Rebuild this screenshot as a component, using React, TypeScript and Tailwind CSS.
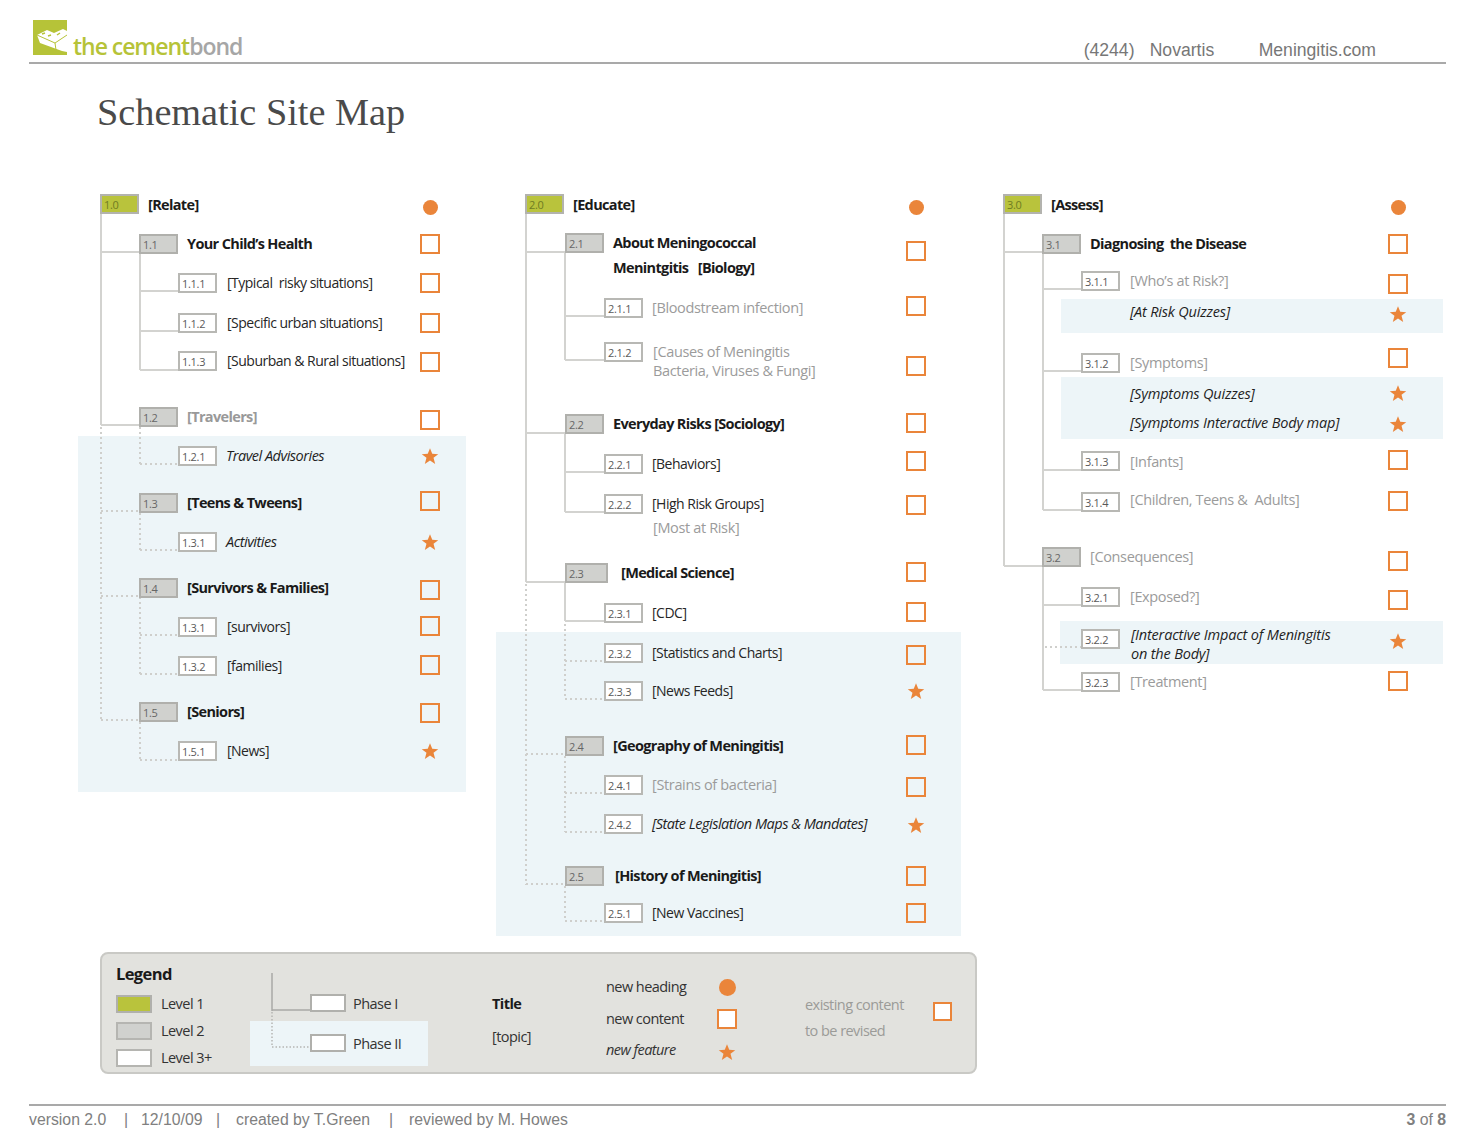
type Tone = "bold" | "boldGray" | "plain" | "gray" | "italic" | "italicWide";
type Mark = "circle" | "square" | "star";
type Level = 1 | 2 | 3;

// canvas starts at page y 180, all y below are page coordinates of the row centre
const CANVAS_Y = 180;

const toneClass: Record<Tone, string> = {
  bold: "text-[14.5px] font-bold text-[#1a1a1a] tracking-[-0.65px]",
  boldGray: "text-[14.5px] font-bold text-[#999999] tracking-[-0.65px]",
  plain: "text-[14px] text-[#262626] tracking-[-0.5px]",
  gray: "text-[14.5px] text-[#9b9b9b] tracking-[-0.35px]",
  italic: "text-[14.5px] italic text-[#1f1f1f] tracking-[-0.5px]",
  italicWide: "text-[14.5px] italic text-[#1f1f1f] tracking-[-0.18px]",
};

const levelClass: Record<Level, string> = {
  1: "bg-[#b9c33c] border-[#b3b3ae] text-[#6f7c22]",
  2: "bg-[#d0d1ce] border-[#b0b0ac] text-[#666666]",
  3: "bg-white border-[#b8b8b4] text-[#595959]",
};

type Box = { num: string; level: Level; x: number; y: number; w?: number };
type Label = { text: string; x: number; y: number; tone: Tone };
type Pin = { kind: Mark; y: number };
type Seg = [number, number, number, number];

type Column = {
  markX: number;
  panels: { x: number; y: number; w: number; h: number }[];
  solid: Seg[];
  dotted: Seg[];
  boxes: Box[];
  labels: Label[];
  marks: Pin[];
};

const columns: Column[] = [
  {
    markX: 430,
    panels: [{ x: 78, y: 436, w: 388, h: 356 }],
    solid: [
      [101, 213, 101, 425],
      [101, 425, 139, 425],
      [101, 252, 139, 252],
      [140, 253, 140, 370],
      [140, 291, 178, 291],
      [140, 331, 178, 331],
      [140, 370, 178, 370],
    ],
    dotted: [
      [101, 427, 101, 720],
      [101, 511, 139, 511],
      [101, 596, 139, 596],
      [101, 720, 139, 720],
      [140, 427, 140, 464],
      [140, 464, 178, 464],
      [140, 513, 140, 550],
      [140, 550, 178, 550],
      [140, 597, 140, 674],
      [140, 635, 178, 635],
      [140, 674, 178, 674],
      [140, 722, 140, 760],
      [140, 760, 178, 760],
    ],
    boxes: [
      { num: "1.0", level: 1, x: 100, y: 204 },
      { num: "1.1", level: 2, x: 139, y: 244 },
      { num: "1.1.1", level: 3, x: 178, y: 283 },
      { num: "1.1.2", level: 3, x: 178, y: 323 },
      { num: "1.1.3", level: 3, x: 178, y: 361 },
      { num: "1.2", level: 2, x: 139, y: 417 },
      { num: "1.2.1", level: 3, x: 178, y: 456 },
      { num: "1.3", level: 2, x: 139, y: 503 },
      { num: "1.3.1", level: 3, x: 178, y: 542 },
      { num: "1.4", level: 2, x: 139, y: 588 },
      { num: "1.3.1", level: 3, x: 178, y: 627 },
      { num: "1.3.2", level: 3, x: 178, y: 666 },
      { num: "1.5", level: 2, x: 139, y: 712 },
      { num: "1.5.1", level: 3, x: 178, y: 751 },
    ],
    labels: [
      { text: "[Relate]", x: 148, y: 205, tone: "bold" },
      { text: "Your Child’s Health", x: 187, y: 244, tone: "bold" },
      { text: "[Typical  risky situations]", x: 227, y: 283, tone: "plain" },
      { text: "[Specific urban situations]", x: 227, y: 323, tone: "plain" },
      { text: "[Suburban & Rural situations]", x: 227, y: 361, tone: "plain" },
      { text: "[Travelers]", x: 187, y: 417, tone: "boldGray" },
      { text: "Travel Advisories", x: 226, y: 456, tone: "italic" },
      { text: "[Teens & Tweens]", x: 187, y: 503, tone: "bold" },
      { text: "Activities", x: 226, y: 542, tone: "italic" },
      { text: "[Survivors & Families]", x: 187, y: 588, tone: "bold" },
      { text: "[survivors]", x: 227, y: 627, tone: "plain" },
      { text: "[families]", x: 227, y: 666, tone: "plain" },
      { text: "[Seniors]", x: 187, y: 712, tone: "bold" },
      { text: "[News]", x: 227, y: 751, tone: "plain" },
    ],
    marks: [
      { kind: "circle", y: 207 },
      { kind: "square", y: 244 },
      { kind: "square", y: 283 },
      { kind: "square", y: 323 },
      { kind: "square", y: 362 },
      { kind: "square", y: 420 },
      { kind: "star", y: 456 },
      { kind: "square", y: 501 },
      { kind: "star", y: 542 },
      { kind: "square", y: 590 },
      { kind: "square", y: 626 },
      { kind: "square", y: 665 },
      { kind: "square", y: 713 },
      { kind: "star", y: 751 },
    ],
  },
  {
    markX: 916,
    panels: [{ x: 496, y: 632, w: 465, h: 304 }],
    solid: [
      [526, 213, 526, 582],
      [526, 252, 565, 252],
      [526, 433, 565, 433],
      [526, 582, 565, 582],
      [565, 253, 565, 360],
      [565, 316, 604, 316],
      [565, 360, 604, 360],
      [565, 434, 565, 512],
      [565, 472, 604, 472],
      [565, 512, 604, 512],
      [565, 583, 565, 621],
      [565, 621, 604, 621],
    ],
    dotted: [
      [526, 584, 526, 885],
      [526, 754, 565, 754],
      [526, 884, 565, 884],
      [565, 624, 565, 699],
      [565, 661, 604, 661],
      [565, 699, 604, 699],
      [565, 756, 565, 832],
      [565, 793, 604, 793],
      [565, 832, 604, 832],
      [565, 886, 565, 921],
      [565, 921, 604, 921],
    ],
    boxes: [
      { num: "2.0", level: 1, x: 525, y: 204 },
      { num: "2.1", level: 2, x: 565, y: 243 },
      { num: "2.1.1", level: 3, x: 604, y: 308 },
      { num: "2.1.2", level: 3, x: 604, y: 352 },
      { num: "2.2", level: 2, x: 565, y: 424 },
      { num: "2.2.1", level: 3, x: 604, y: 464 },
      { num: "2.2.2", level: 3, x: 604, y: 504 },
      { num: "2.3", level: 2, x: 565, y: 573, w: 43 },
      { num: "2.3.1", level: 3, x: 604, y: 613 },
      { num: "2.3.2", level: 3, x: 604, y: 653 },
      { num: "2.3.3", level: 3, x: 604, y: 691 },
      { num: "2.4", level: 2, x: 565, y: 746 },
      { num: "2.4.1", level: 3, x: 604, y: 785 },
      { num: "2.4.2", level: 3, x: 604, y: 824 },
      { num: "2.5", level: 2, x: 565, y: 876 },
      { num: "2.5.1", level: 3, x: 604, y: 913 },
    ],
    labels: [
      { text: "[Educate]", x: 573, y: 205, tone: "bold" },
      { text: "About Meningococcal", x: 613, y: 243, tone: "bold" },
      { text: "Menintgitis   [Biology]", x: 613, y: 268, tone: "bold" },
      { text: "[Bloodstream infection]", x: 652, y: 308, tone: "gray" },
      { text: "[Causes of Meningitis", x: 653, y: 352, tone: "gray" },
      { text: "Bacteria, Viruses & Fungi]", x: 653, y: 371, tone: "gray" },
      { text: "Everyday Risks [Sociology]", x: 613, y: 424, tone: "bold" },
      { text: "[Behaviors]", x: 652, y: 464, tone: "plain" },
      { text: "[High Risk Groups]", x: 652, y: 504, tone: "plain" },
      { text: "[Most at Risk]", x: 653, y: 528, tone: "gray" },
      { text: "[Medical Science]", x: 621, y: 573, tone: "bold" },
      { text: "[CDC]", x: 652, y: 613, tone: "plain" },
      { text: "[Statistics and Charts]", x: 652, y: 653, tone: "plain" },
      { text: "[News Feeds]", x: 652, y: 691, tone: "plain" },
      { text: "[Geography of Meningitis]", x: 613, y: 746, tone: "bold" },
      { text: "[Strains of bacteria]", x: 652, y: 785, tone: "gray" },
      { text: "[State Legislation Maps & Mandates]", x: 652, y: 824, tone: "italic" },
      { text: "[History of Meningitis]", x: 615, y: 876, tone: "bold" },
      { text: "[New Vaccines]", x: 652, y: 913, tone: "plain" },
    ],
    marks: [
      { kind: "circle", y: 207 },
      { kind: "square", y: 251 },
      { kind: "square", y: 306 },
      { kind: "square", y: 366 },
      { kind: "square", y: 423 },
      { kind: "square", y: 461 },
      { kind: "square", y: 505 },
      { kind: "square", y: 572 },
      { kind: "square", y: 612 },
      { kind: "square", y: 655 },
      { kind: "star", y: 691 },
      { kind: "square", y: 745 },
      { kind: "square", y: 787 },
      { kind: "star", y: 825 },
      { kind: "square", y: 876 },
      { kind: "square", y: 913 },
    ],
  },
  {
    markX: 1398,
    panels: [
      { x: 1061, y: 299, w: 382, h: 34 },
      { x: 1061, y: 377, w: 382, h: 62 },
      { x: 1060, y: 621, w: 383, h: 43 },
    ],
    solid: [
      [1004, 213, 1004, 566],
      [1004, 252, 1042, 252],
      [1004, 566, 1042, 566],
      [1043, 253, 1043, 510],
      [1043, 289, 1081, 289],
      [1043, 371, 1081, 371],
      [1043, 470, 1081, 470],
      [1043, 510, 1081, 510],
      [1043, 566, 1043, 690],
      [1043, 605, 1081, 605],
      [1043, 690, 1081, 690],
    ],
    dotted: [[1045, 647, 1081, 647]],
    boxes: [
      { num: "3.0", level: 1, x: 1003, y: 204 },
      { num: "3.1", level: 2, x: 1042, y: 244 },
      { num: "3.1.1", level: 3, x: 1081, y: 281 },
      { num: "3.1.2", level: 3, x: 1081, y: 363 },
      { num: "3.1.3", level: 3, x: 1081, y: 461 },
      { num: "3.1.4", level: 3, x: 1081, y: 502 },
      { num: "3.2", level: 2, x: 1042, y: 557 },
      { num: "3.2.1", level: 3, x: 1081, y: 597 },
      { num: "3.2.2", level: 3, x: 1081, y: 639 },
      { num: "3.2.3", level: 3, x: 1081, y: 682 },
    ],
    labels: [
      { text: "[Assess]", x: 1051, y: 205, tone: "bold" },
      { text: "Diagnosing  the Disease", x: 1090, y: 244, tone: "bold" },
      { text: "[Who’s at Risk?]", x: 1130, y: 281, tone: "gray" },
      { text: "[At Risk Quizzes]", x: 1130, y: 312, tone: "italicWide" },
      { text: "[Symptoms]", x: 1130, y: 363, tone: "gray" },
      { text: "[Symptoms Quizzes]", x: 1130, y: 394, tone: "italicWide" },
      { text: "[Symptoms Interactive Body map]", x: 1130, y: 423, tone: "italicWide" },
      { text: "[Infants]", x: 1130, y: 462, tone: "gray" },
      { text: "[Children, Teens &  Adults]", x: 1130, y: 500, tone: "gray" },
      { text: "[Consequences]", x: 1090, y: 557, tone: "gray" },
      { text: "[Exposed?]", x: 1130, y: 597, tone: "gray" },
      { text: "[Interactive Impact of Meningitis", x: 1131, y: 635, tone: "italicWide" },
      { text: "on the Body]", x: 1131, y: 654, tone: "italicWide" },
      { text: "[Treatment]", x: 1130, y: 682, tone: "gray" },
    ],
    marks: [
      { kind: "circle", y: 207 },
      { kind: "square", y: 244 },
      { kind: "square", y: 284 },
      { kind: "star", y: 314 },
      { kind: "square", y: 358 },
      { kind: "star", y: 393 },
      { kind: "star", y: 424 },
      { kind: "square", y: 460 },
      { kind: "square", y: 501 },
      { kind: "square", y: 561 },
      { kind: "square", y: 600 },
      { kind: "star", y: 641 },
      { kind: "square", y: 681 },
    ],
  },
];

function StarIcon({ className }: { className: string }) {
  return (
    <svg viewBox="0 0 24 24" className={className}>
      <polygon
        points="12,1.5 15,9 23,9.5 16.7,14.4 18.9,22.5 12,18 5.1,22.5 7.3,14.4 1,9.5 9,9"
        fill="#ea853a"
      />
    </svg>
  );
}

function MarkIcon({ kind }: { kind: Mark }) {
  if (kind === "circle") return <div className="w-[15px] h-[15px] rounded-full bg-[#ea853a]" />;
  if (kind === "star") return <StarIcon className="w-[18px] h-[18px]" />;
  return <div className="w-5 h-5 border-2 border-[#ea853a]" />;
}

function TreeColumn({ col }: { col: Column }) {
  return (
    <>
      {col.panels.map((p) => (
        <div
          key={p.y}
          className="absolute bg-[#edf5f8]"
          style={{ left: p.x, top: p.y - CANVAS_Y, width: p.w, height: p.h }}
        />
      ))}
      <svg className="absolute left-0 top-0 w-[1480px] h-[760px]" viewBox={`0 ${CANVAS_Y} 1480 760`}>
        {col.solid.map(([x1, y1, x2, y2]) => (
          <line key={`${x1}-${y1}-${x2}-${y2}`} x1={x1} y1={y1} x2={x2} y2={y2} stroke="#d3d3d0" strokeWidth="2" />
        ))}
        {col.dotted.map(([x1, y1, x2, y2]) => (
          <line
            key={`${x1}-${y1}-${x2}-${y2}`}
            x1={x1}
            y1={y1}
            x2={x2}
            y2={y2}
            stroke="#cfcfcc"
            strokeWidth="2"
            strokeDasharray="2 3"
          />
        ))}
      </svg>
      {col.boxes.map((b) => (
        <div
          key={`${b.num}-${b.y}`}
          className={`absolute h-[20px] border-2 pl-[2px] text-[11px] leading-[17px] tracking-[-0.3px] ${levelClass[b.level]}`}
          style={{ left: b.x, top: b.y - 10 - CANVAS_Y, width: b.w ?? 39 }}
        >
          {b.num}
        </div>
      ))}
      {col.labels.map((l) => (
        <div
          key={`${l.text}-${l.y}`}
          className={`absolute h-5 leading-5 whitespace-pre ${toneClass[l.tone]}`}
          style={{ left: l.x, top: l.y - 10 - CANVAS_Y }}
        >
          {l.text}
        </div>
      ))}
      {col.marks.map((m) => (
        <div
          key={m.y}
          className="absolute w-5 h-5 flex items-center justify-center"
          style={{ left: col.markX - 10, top: m.y - 10 - CANVAS_Y }}
        >
          <MarkIcon kind={m.kind} />
        </div>
      ))}
    </>
  );
}

function Swatch({ className }: { className: string }) {
  return <div className={`w-[36px] h-[18px] border-2 ${className}`} />;
}

function Legend() {
  return (
    <section className="ml-[100px] w-[877px] h-[122px] mt-[12px] bg-[#e2e2de] border-2 border-[#c9c9c5] rounded-lg grid grid-cols-[148px_242px_114px_199px_1fr] text-[14.5px] leading-5 text-[#333333] tracking-[-0.55px]">
      <div className="pl-[14px] pt-[10px] flex flex-col">
        <div className="text-[16.5px] font-bold text-[#1a1a1a] tracking-[-0.6px]">Legend</div>
        <div className="mt-[10px] flex items-center gap-[9px]">
          <Swatch className="bg-[#b9c33c] border-[#b0b0ac]" />
          Level 1
        </div>
        <div className="mt-[7px] flex items-center gap-[9px]">
          <Swatch className="bg-[#d0d1ce] border-[#b5b5b1]" />
          Level 2
        </div>
        <div className="mt-[7px] flex items-center gap-[9px]">
          <Swatch className="bg-white border-[#b5b5b1]" />
          Level 3+
        </div>
      </div>
      <div className="relative flex flex-col w-[178px]">
        <div className="mt-[40px] pl-[60px] h-[18px] flex items-center gap-[7px] relative z-10">
          <Swatch className="bg-white border-[#b0b0ac]" />
          <span className="mt-[1px]">Phase I</span>
        </div>
        <div className="mt-[9px] h-[45px] pl-[60px] pt-[13px] bg-[#edf5f8] flex items-start gap-[7px] relative">
          <Swatch className="bg-white border-[#b0b0ac]" />
          Phase II
        </div>
        <svg className="absolute left-0 top-0 w-[80px] h-[110px] z-0" viewBox="0 0 80 110">
          <line x1="22" y1="19" x2="22" y2="57" stroke="#a9a9a6" strokeWidth="1.5" />
          <line x1="22" y1="56" x2="60" y2="56" stroke="#a9a9a6" strokeWidth="1.5" />
        </svg>
        <svg className="absolute left-0 top-0 w-[80px] h-[110px] z-20" viewBox="0 0 80 110">
          <line x1="22" y1="58" x2="22" y2="93" stroke="#b5b5b2" strokeWidth="1.5" strokeDasharray="1.5 2" />
          <line x1="22" y1="93" x2="60" y2="93" stroke="#b5b5b2" strokeWidth="1.5" strokeDasharray="1.5 2" />
        </svg>
      </div>
      <div className="pt-[40px] flex flex-col gap-[13px]">
        <div className="font-bold text-[#1a1a1a]">Title</div>
        <div>[topic]</div>
      </div>
      <div className="pt-[23px] flex flex-col w-[131px]">
        <div className="flex items-center justify-between">
          new heading
          <div className="w-5 flex justify-center">
            <div className="w-[17px] h-[17px] rounded-full bg-[#ea853a]" />
          </div>
        </div>
        <div className="mt-[12px] flex items-center justify-between">
          new content
          <div className="w-5 h-5 border-2 border-[#ea853a] bg-white" />
        </div>
        <div className="mt-[10px] flex items-center justify-between italic">
          new feature
          <div className="w-5 flex justify-center pt-[4px]">
            <StarIcon className="w-[18px] h-[18px]" />
          </div>
        </div>
      </div>
      <div className="pt-[41px] flex">
        <div className="w-[128px] flex flex-col gap-[6px] text-[#9b9b98]">
          <div>existing content</div>
          <div>to be revised</div>
        </div>
        <div className="mt-[7px] w-[19px] h-[19px] border-2 border-[#ea853a] bg-white" />
      </div>
    </section>
  );
}

export default function App() {
  return (
    <div className="w-[1480px] h-[1143px] bg-white overflow-hidden font-['Open_Sans',sans-serif]">
      <header className="ml-[29px] mr-[34px] h-[64px] border-b-2 border-[#a9a9a9] flex items-end justify-between">
        <div className="ml-[4px] mb-[7px] flex items-end gap-[6px]">
          <svg viewBox="0 0 34 35" className="w-[34px] h-[35px]">
            <rect width="34" height="35" fill="#b6c338" />
            <path d="M4 15 L14 10 L21 13 L30 9 L34 11 V32 L29 31 L7 23 Z" fill="#ffffff" />
            <path d="M4 15 L22 23 L34 15 M22 23 L23 30" stroke="#b6c338" strokeWidth="1" fill="none" />
            <path d="M9 14 L12 13 M15 16 L18 15 M24 15 L27 13" stroke="#b6c338" strokeWidth="1.5" />
          </svg>
          <div className="-mb-[5px] text-[23px] leading-[28px] font-semibold tracking-[-1.04px]">
            <span className="text-[#b6c338]">the cement</span>
            <span className="text-[#a6a6a6]">bond</span>
          </div>
        </div>
        <div className="mr-[70px] flex text-[17.6px] leading-[24px] text-[#777777] font-['Liberation_Sans',sans-serif]">
          <span className="w-[66px]">(4244)</span>
          <span className="w-[109px]">Novartis</span>
          <span>Meningitis.com</span>
        </div>
      </header>

      <h1 className="ml-[97px] mt-[23px] h-[93px] text-[38.25px] leading-[50px] text-[#4a4a4a] font-['Liberation_Serif',serif]">
        Schematic Site Map
      </h1>

      <main className="relative h-[760px]">
        {columns.map((col) => (
          <TreeColumn key={col.markX} col={col} />
        ))}
      </main>

      <Legend />

      <footer className="ml-[29px] mr-[34px] mt-[30px] pt-[3px] border-t-2 border-[#a9a9a9] flex justify-between text-[15.8px] leading-[22px] text-[#808080] font-['Liberation_Sans',sans-serif]">
        <div className="flex">
          <span className="w-[95px]">version 2.0</span>
          <span className="w-[17px]">|</span>
          <span className="w-[75px]">12/10/09</span>
          <span className="w-[20px]">|</span>
          <span className="w-[153px]">created by T.Green</span>
          <span className="w-[20px]">|</span>
          <span>reviewed by M. Howes</span>
        </div>
        <div>
          <b>3</b> of <b>8</b>
        </div>
      </footer>
    </div>
  );
}
